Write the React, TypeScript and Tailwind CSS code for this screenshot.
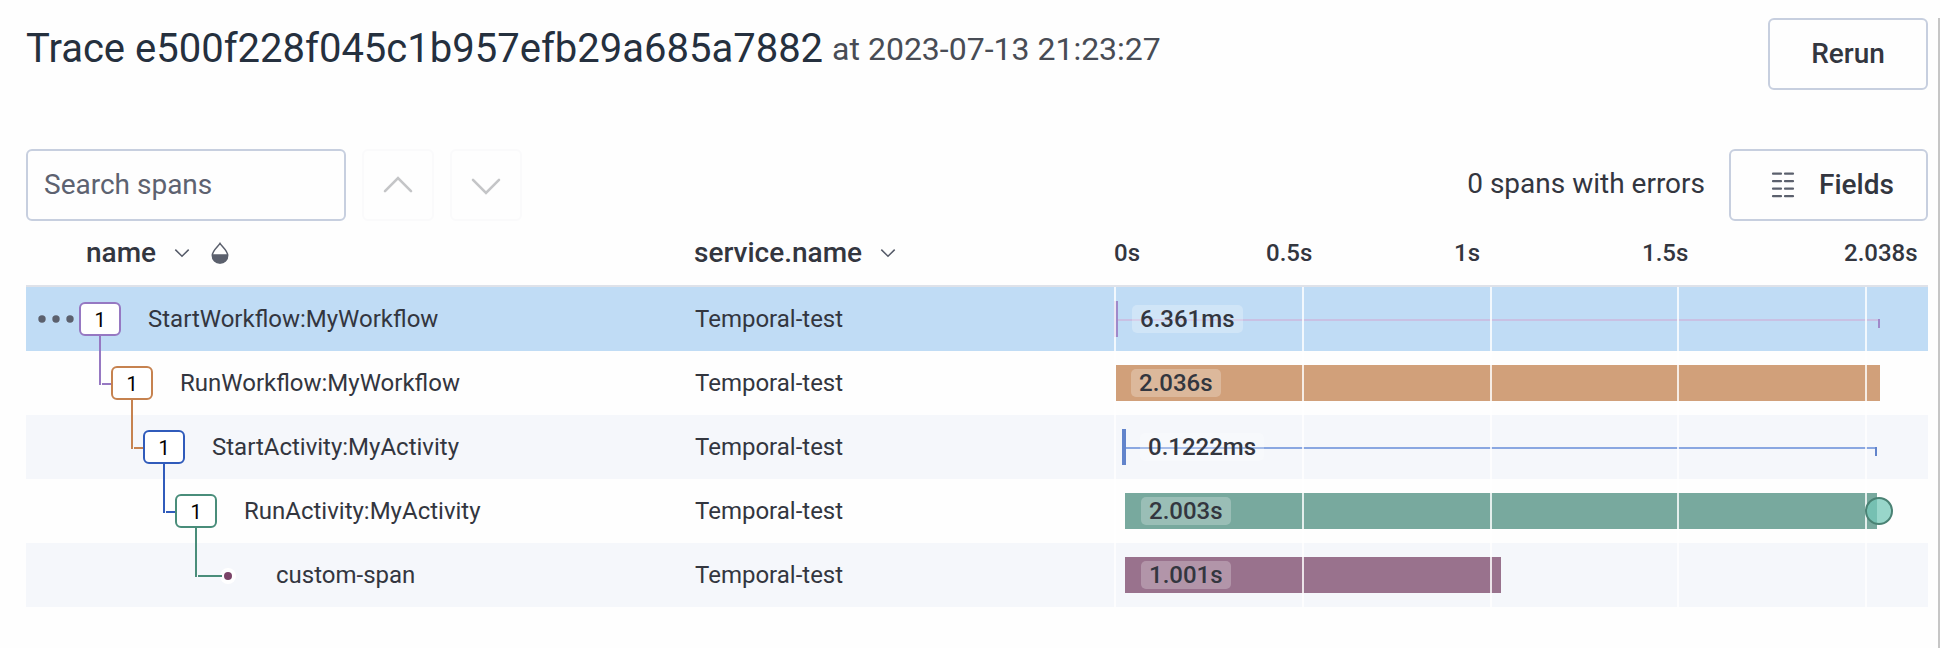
type Span = {
  name: string;
  duration: string;
  rowBg: string;
  indent: string;
  badge?: string;
  connector?: string;
  label: string;
};

const spans: Span[] = [
  {
    name: "StartWorkflow:MyWorkflow",
    duration: "6.361ms",
    rowBg: "bg-[#c0dcf5]",
    indent: "pl-[53px]",
    badge: "border-[#9678c2]",
    label: "left-[18px]",
  },
  {
    name: "RunWorkflow:MyWorkflow",
    duration: "2.036s",
    rowBg: "",
    indent: "pl-[85px]",
    badge: "border-[#c6824f]",
    connector: "bg-[#9678c2]",
    label: "left-[17px]",
  },
  {
    name: "StartActivity:MyActivity",
    duration: "0.1222ms",
    rowBg: "bg-[#f5f7fb]",
    indent: "pl-[117px]",
    badge: "border-[#305bbb]",
    connector: "bg-[#c6824f]",
    label: "left-[26px]",
  },
  {
    name: "RunActivity:MyActivity",
    duration: "2.003s",
    rowBg: "",
    indent: "pl-[149px]",
    badge: "border-[#498d7a]",
    connector: "bg-[#305bbb]",
    label: "left-[27px]",
  },
  {
    name: "custom-span",
    duration: "1.001s",
    rowBg: "bg-[#f5f7fb]",
    indent: "pl-[181px]",
    connector: "bg-[#498d7a]",
    label: "left-[27px]",
  },
];

function SmallChevron() {
  return (
    <svg className="h-2.5 w-4 shrink-0" viewBox="0 0 16 10" fill="none" stroke="#565b69" strokeWidth="1.5">
      <path d="M1.3 1.6 L8 8.2 L14.7 1.6" />
    </svg>
  );
}

function DropIcon() {
  return (
    <svg className="h-[22px] w-[18px] shrink-0" viewBox="0 0 18 22">
      <path
        d="M9 1.4 C7.2 4.3 1.3 8.6 1.3 13.4 A7.7 7.7 0 0 0 16.7 13.4 C16.7 8.6 10.8 4.3 9 1.4 Z"
        fill="none"
        stroke="#5b606d"
        strokeWidth="1.5"
      />
      <path d="M1 12.2 H17 V13.4 A8 8 0 0 1 1 13.4 Z" fill="#5b606d" />
    </svg>
  );
}

function FieldsIcon() {
  return (
    <svg className="h-[26px] w-6 shrink-0" viewBox="0 0 24 26" stroke="#5b606d" strokeWidth="2.2" strokeLinecap="round">
      <path d="M2 1.7H10M14 1.7H22M2 9.2H10M14 9.2H22M2 16.7H10M14 16.7H22M2 24.2H10M14 24.2H22" />
    </svg>
  );
}

function NavButton({ d }: { d: string }) {
  return (
    <button className="flex h-[72px] w-[72px] items-center justify-center rounded-md border-2 border-[#fafafb]">
      <svg
        className="h-5 w-8"
        viewBox="0 0 32 20"
        fill="none"
        stroke="#c4c5c7"
        strokeWidth="2.6"
        strokeLinecap="round"
      >
        <path d={d} />
      </svg>
    </button>
  );
}

function Bar({ index }: { index: number }) {
  if (index === 0)
    return (
      <>
        <i className="absolute left-0 top-[14px] h-9 w-1 bg-[#9f89ca]" />
        <i className="absolute left-1 top-8 h-0.5 w-[760px] bg-[#c9c1e3]" />
        <i className="absolute left-[764px] top-8 h-[9px] w-0.5 bg-[#9f89ca]" />
      </>
    );
  if (index === 2)
    return (
      <>
        <i className="absolute left-[8px] top-[14px] h-9 w-1 bg-[#6284cb]" />
        <i className="absolute left-[12px] top-8 h-0.5 w-[749px] bg-[#8aa7e1]" />
        <i className="absolute left-[761px] top-8 h-[9px] w-0.5 bg-[#6284cb]" />
      </>
    );
  if (index === 1) return <i className="absolute left-0.5 top-[14px] h-9 w-[764px] bg-[#d1a07a]" />;
  if (index === 3) return <i className="absolute left-[11px] top-[14px] h-9 w-[752px] bg-[#78a99e]" />;
  return <i className="absolute left-[11px] top-[14px] h-9 w-[376px] bg-[#99728d]" />;
}

function GridLines() {
  return (
    <>
      <i className="absolute left-0 top-0 h-16 w-0.5 bg-white/80" />
      <i className="absolute left-[188px] top-0 h-16 w-0.5 bg-white/80" />
      <i className="absolute left-[376px] top-0 h-16 w-0.5 bg-white/80" />
      <i className="absolute left-[563px] top-0 h-16 w-0.5 bg-white/80" />
      <i className="absolute left-[751px] top-0 h-16 w-0.5 bg-white/80" />
    </>
  );
}

function Row({ span, index }: { span: Span; index: number }) {
  return (
    <div className={`flex h-16 items-center text-2xl ${span.rowBg}`}>
      <div className={`relative flex h-16 w-[667px] items-center ${span.indent}`}>
        {index === 0 && (
          <svg className="absolute left-3 top-7 h-2 w-9" viewBox="0 0 36 8" fill="#5b606d">
            <circle cx="4" cy="4" r="3.7" />
            <circle cx="18" cy="4" r="3.7" />
            <circle cx="32" cy="4" r="3.7" />
          </svg>
        )}
        {span.connector && (
          <div className="relative h-16 w-0">
            <i className={`absolute -left-3 -top-[15px] h-[49px] w-0.5 ${span.connector}`} />
            <i className={`absolute -left-[9px] top-8 h-0.5 ${span.badge ? "w-2.5" : "w-6"} ${span.connector}`} />
          </div>
        )}
        {span.badge ? (
          <span
            className={`relative flex h-[34px] w-[42px] items-center justify-center rounded-md border-2 bg-white pt-0.5 text-xl text-black ${span.badge}`}
          >
            1
          </span>
        ) : (
          <span className="flex w-[42px] justify-center pt-0.5">
            <span className="flex size-4 items-center justify-center rounded-full bg-white">
              <span className="size-2 rounded-full bg-[#7b4468]" />
            </span>
          </span>
        )}
        <span className="pl-[27px]">{span.name}</span>
      </div>
      <div className="w-[421px] pl-0.5">Temporal-test</div>
      <div className="relative h-16 w-[814px]">
        <Bar index={index} />
        <GridLines />
        <span
          className={`absolute top-[18px] flex h-7 items-center rounded-[5px] bg-white/25 px-2 pb-px font-medium ${span.label}`}
        >
          {span.duration}
        </span>
        {index === 3 && (
          <i className="absolute left-[751px] top-[18px] size-7 rounded-full border-2 border-[#4a8274] bg-[#76c8b8]/75" />
        )}
      </div>
    </div>
  );
}

export default function App() {
  return (
    <div className="flex h-[648px] w-[1940px] bg-[#fefefe] font-['Roboto',sans-serif] text-[#33363f]">
      <div className="w-[1938px] pl-[26px] pr-2.5 pt-[18px]">
        <header className="flex h-[72px] items-start justify-between">
          <h1 className="flex items-start gap-[9px] pt-px text-[40px] leading-[60px] text-[#25303e]">
            Trace e500f228f045c1b957efb29a685a7882
            <small className="text-[32px] leading-[60px] text-[#484c55]">at 2023-07-13 21:23:27</small>
          </h1>
          <button className="h-[72px] w-40 rounded-md border-2 border-[#c7cfdf] text-[28px] font-medium">Rerun</button>
        </header>

        <div className="mt-[59px] flex h-[72px] items-center">
          <div className="flex h-[72px] w-80 items-center rounded-md border-2 border-[#c7cfdf] px-4 text-[28px] text-[#5d6270]">
            Search spans
          </div>
          <div className="ml-4 flex gap-4">
            <NavButton d="M3 16.2 L16 3.2 L29 16.2" />
            <NavButton d="M3 4.8 L16 17.8 L29 4.8" />
          </div>
          <span className="ml-auto pb-0.5 text-[28px]">0 spans with errors</span>
          <button className="ml-6 flex h-[72px] w-[199px] items-center rounded-md border-2 border-[#c7cfdf] pl-10 text-[28px] font-medium">
            <FieldsIcon />
            <span className="ml-6">Fields</span>
          </button>
        </div>

        <div className="flex h-[66px] items-center border-b-2 border-[#dfe2e9] text-[28px] font-medium">
          <div className="flex w-[667px] items-center gap-[18px] pl-[60px]">
            name
            <SmallChevron />
            <span className="ml-[3px]">
              <DropIcon />
            </span>
          </div>
          <div className="flex w-[421px] items-center gap-[18px] pl-px">
            service.name
            <SmallChevron />
          </div>
          <div className="grid w-[814px] grid-cols-[152px_188px_188px_202px_auto] text-2xl">
            <span>0s</span>
            <span>0.5s</span>
            <span>1s</span>
            <span>1.5s</span>
            <span>2.038s</span>
          </div>
        </div>

        {spans.map((s, i) => (
          <Row key={s.name} span={s} index={i} />
        ))}
      </div>
      <div className="mt-[18px] w-0.5 bg-[#c6c6c6]" />
    </div>
  );
}
